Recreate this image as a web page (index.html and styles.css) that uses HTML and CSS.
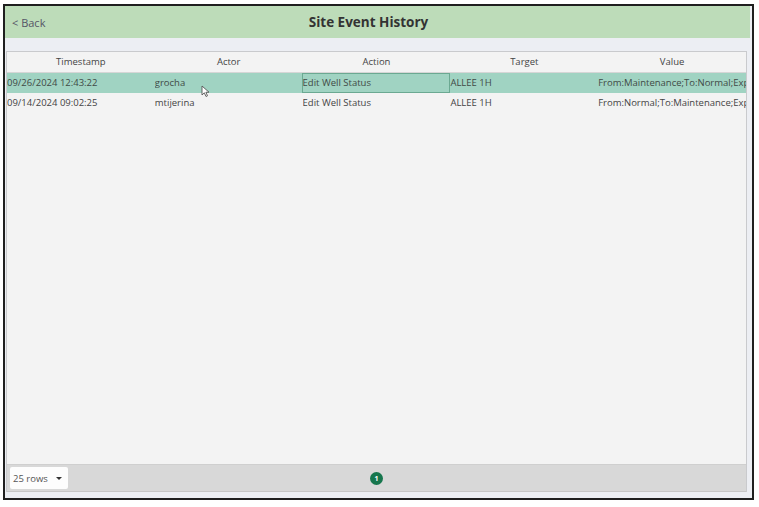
FILE: index.html
```html
<!DOCTYPE html>
<html>
<head>
<meta charset="utf-8">
<link rel="stylesheet" href="styles.css">
</head>
<body>
<div class="frame">
  <div class="header">
    <span class="back">&lt; Back</span>
    <span class="title">Site Event History</span>
  </div>
  <div class="band"></div>
  <div class="panel">
    <div class="grid">
      <div class="row head">
        <div class="cell">Timestamp</div>
        <div class="cell">Actor</div>
        <div class="cell">Action</div>
        <div class="cell">Target</div>
        <div class="cell">Value</div>
      </div>
      <div class="row selected">
        <div class="cell">09/26/2024 12:43:22</div>
        <div class="cell">grocha</div>
        <div class="cell focus">Edit Well Status</div>
        <div class="cell">ALLEE 1H</div>
        <div class="cell">From:Maintenance;To:Normal;Expires:</div>
      </div>
      <div class="row">
        <div class="cell">09/14/2024 09:02:25</div>
        <div class="cell">mtijerina</div>
        <div class="cell">Edit Well Status</div>
        <div class="cell">ALLEE 1H</div>
        <div class="cell">From:Normal;To:Maintenance;Expires:</div>
      </div>
    </div>
    <div class="footer">
      <div class="rows-select">25 rows <span class="caret"></span></div>
      <div class="pager"><span class="page">1</span></div>
    </div>
  </div>
  <svg class="cursor" width="9" height="13" viewBox="0 0 9 13"><path d="M1 1 L1 10 L3.3 7.8 L5 11.5 L6.5 10.8 L4.9 7.3 L8 7.2 Z" fill="#fff" stroke="#555" stroke-width="0.9" stroke-linejoin="round"/></svg>
</div>
</body>
</html>
```

FILE: styles.css
```css
* { box-sizing: border-box; }
html, body { margin: 0; padding: 0; background: #ffffff; }
body {
  font-family: "Open Sans", "Noto Sans", sans-serif;
  color: #444;
}
.frame {
  position: relative;
  margin: 4px 0 0 3px;
  width: 751px;
  height: 496px;
  border: 2px solid #1f1f1f;
  background: #eceef3;
  display: flex;
  flex-direction: column;
  padding-right: 2px;
}
.header {
  height: 32px;
  background: #bddcb9;
  display: flex;
  align-items: center;
  position: relative;
  flex: none;
}
.back {
  font-size: 11px;
  color: #556;
  margin-left: 7px;
}
.title {
  position: absolute;
  left: 0; right: 0;
  padding-right: 18px;
  text-align: center;
  font-size: 13.5px;
  font-weight: 700;
  color: #333;
  pointer-events: none;
}
.band { height: 13px; flex: none; }
.panel {
  flex: 1;
  margin: 0 3px 6px 1px;
  border: 1px solid #c9cacd;
  border-bottom: none;
  background: #f3f3f3;
  display: flex;
  flex-direction: column;
}
.grid { flex: 1; }
.row {
  display: grid;
  grid-template-columns: repeat(5, 1fr);
  height: 20px;
  align-items: stretch;
}
.cell {
  font-size: 9.5px;
  line-height: 20px;
  white-space: nowrap;
  overflow: hidden;
  color: #444;
}
.head {
  height: 21px;
  border-bottom: 1px solid #d6d6d6;
}
.head .cell { text-align: center; line-height: 20px; color: #444; }
.selected { background: #a0d3c2; }
.selected .cell { color: #3f4a46; }
.focus {
  border: 1px solid #6ba992;
  line-height: 18px;
  margin-left: -1px;
}
.footer {
  height: 28px;
  background: #d8d8d8;
  border-top: 1px solid #cfcfcf;
  border-bottom: 1px solid #c6c6c6;
  display: flex;
  align-items: center;
  position: relative;
  flex: none;
}
.rows-select {
  margin-left: 3px;
  width: 58px;
  height: 22px;
  background: #fdfdfd;
  border-radius: 2px;
  font-size: 9.5px;
  color: #555;
  display: flex;
  align-items: center;
  padding-left: 3px;
  gap: 8px;
}
.caret {
  width: 0; height: 0;
  border-left: 3px solid transparent;
  border-right: 3px solid transparent;
  border-top: 3.5px solid #333;
}
.pager {
  position: absolute;
  left: 0; right: 0;
  display: flex;
  justify-content: center;
}
.page {
  width: 13px; height: 13px;
  border-radius: 50%;
  background: #16764d;
  color: #fff;
  font-size: 7px;
  font-weight: 700;
  display: flex;
  align-items: center;
  justify-content: center;
}
.cursor {
  position: absolute;
  left: 196px;
  top: 79px;
}
```
